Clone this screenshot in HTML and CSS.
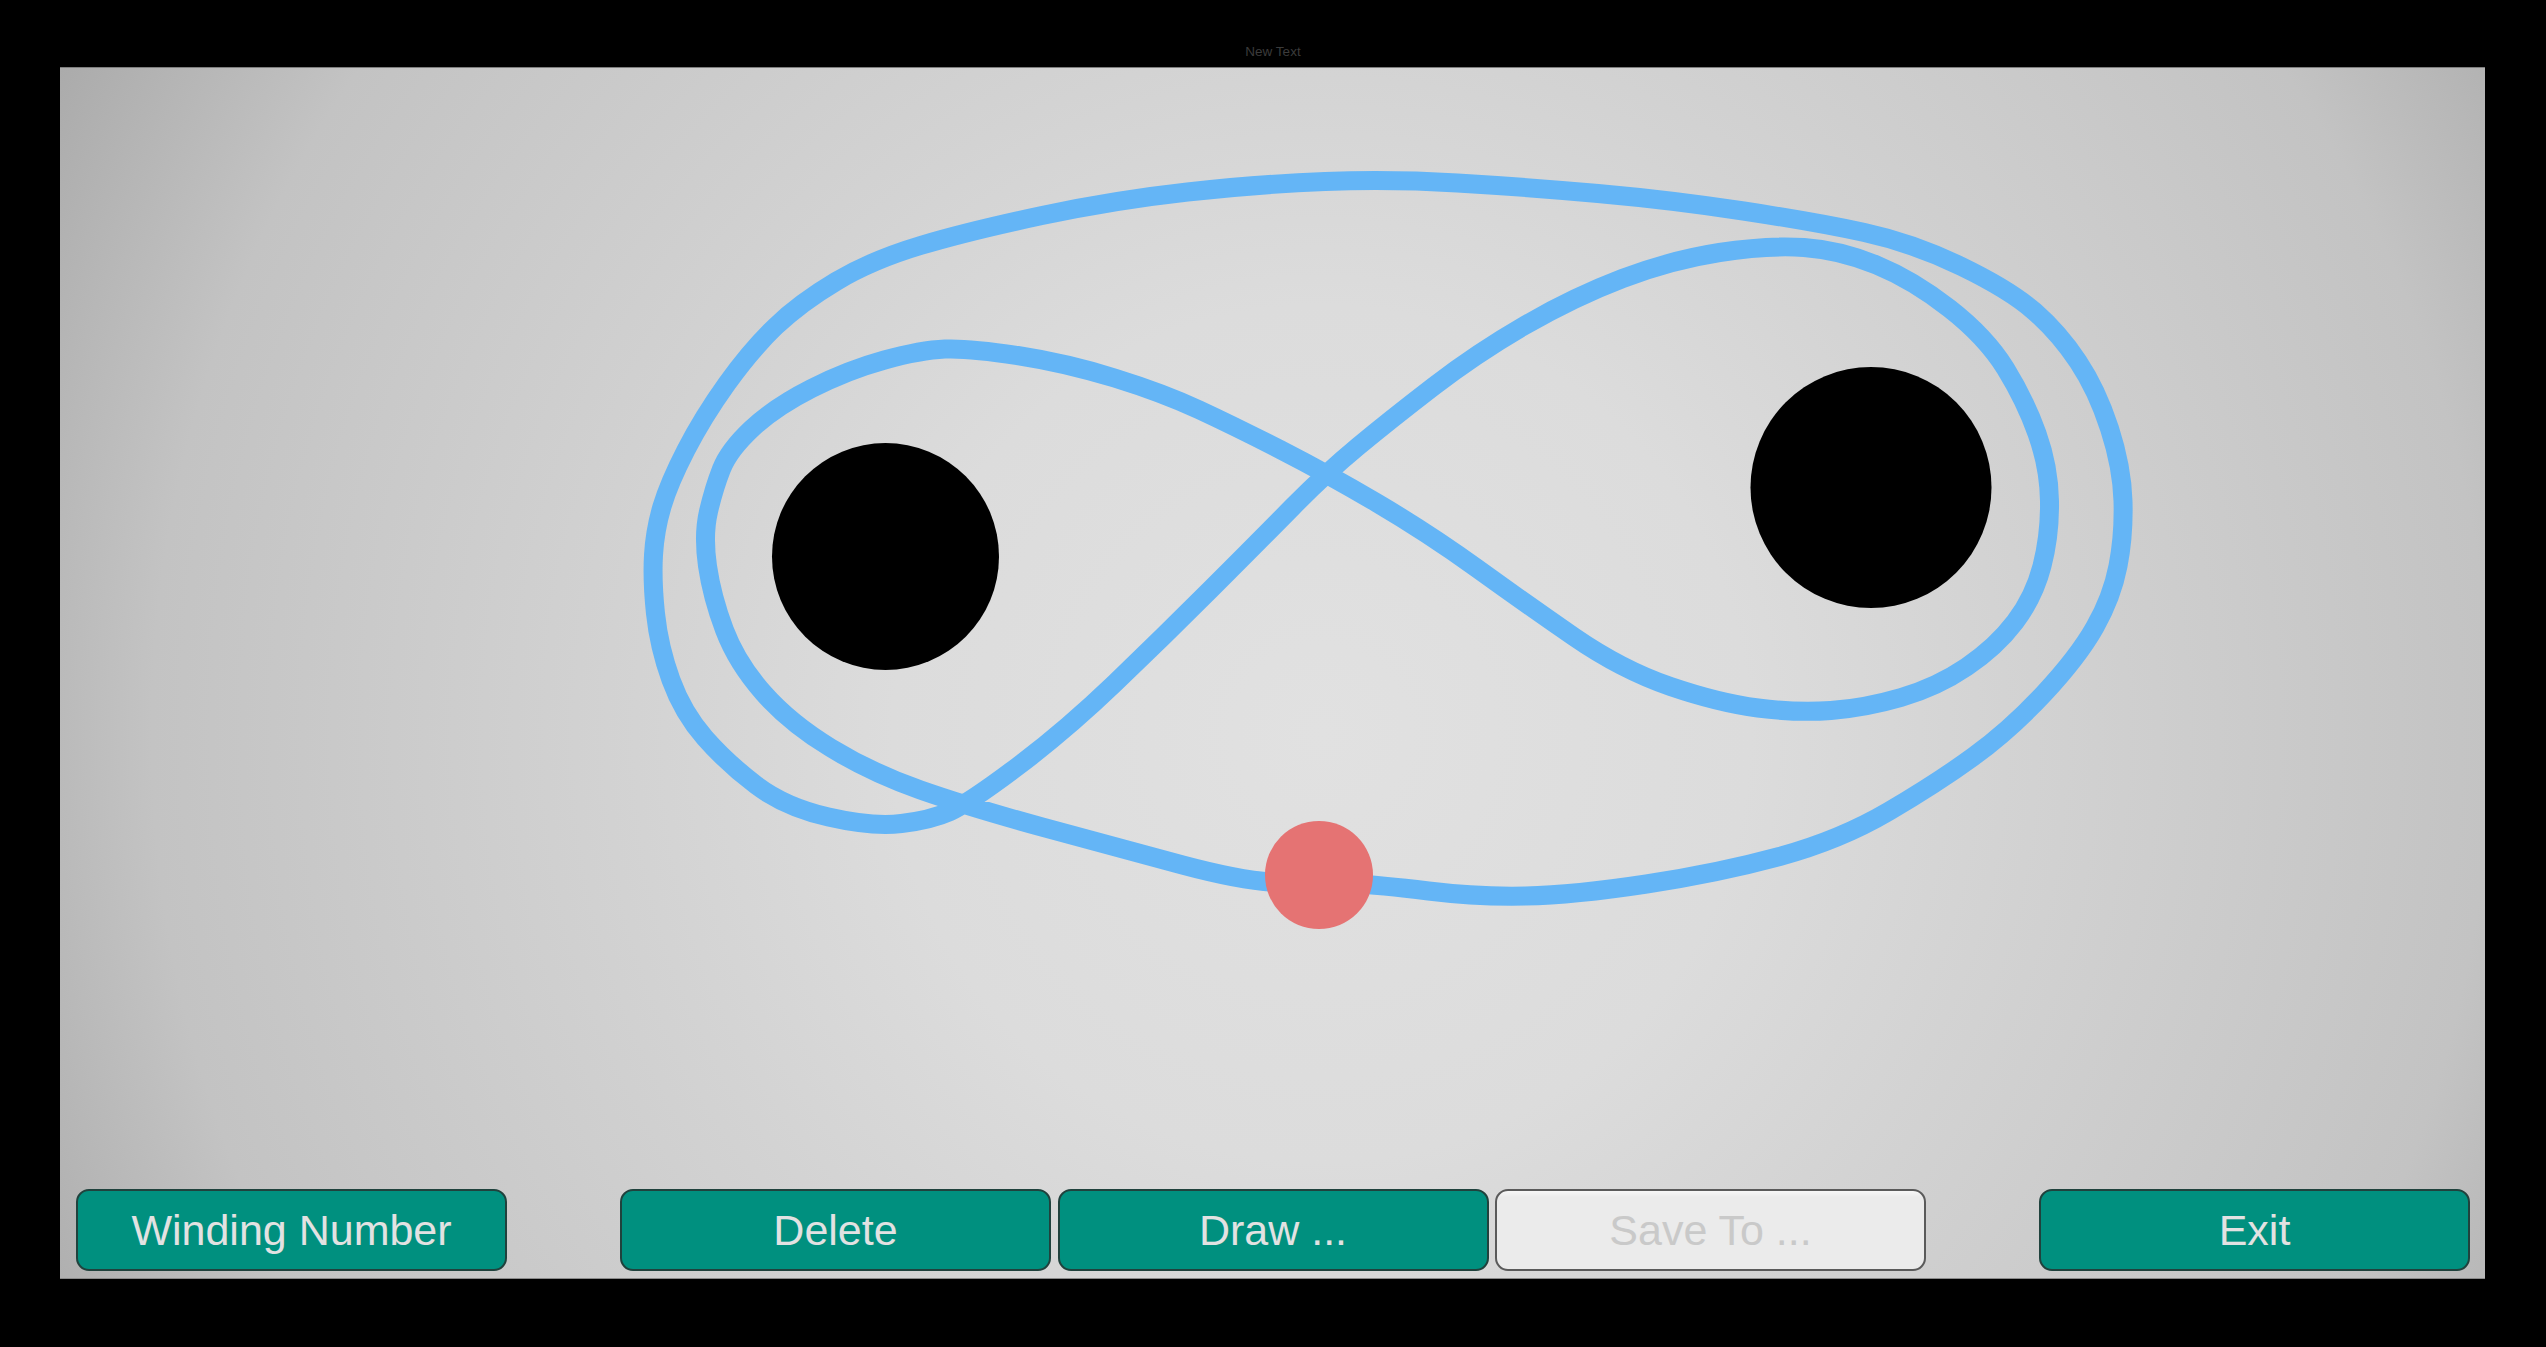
FILE: index.html
```html
<!DOCTYPE html>
<html>
<head>
<meta charset="utf-8">
<link rel="stylesheet" href="styles.css">
</head>
<body>
<div class="header"><span class="title">New Text</span></div>
<div class="panel">
  <svg class="canvas" viewBox="60 67 2425 1212" width="2425" height="1212">
    <path class="curve" d="M 1284.5 882.5
      Q 1250 883 1182.5 865 Q 1115 847 1042 827 Q 969 807 920.5 790 Q 872 773 831 748
      Q 790 723 763.5 693 Q 737 663 724.5 630 Q 712 597 707.5 566 Q 703 535 708.5 511.5
      Q 714 488 721.5 469 Q 729 450 752 428.5 Q 775 407 811.5 388.5 Q 848 370 884.5 360
      Q 921 350 945 349 Q 969 348 1017.5 355.5 Q 1066 363 1114.5 378 Q 1163 393 1199.5 410
      Q 1236 427 1281 450 Q 1326 473 1377 503 Q 1428 533 1476.5 568 Q 1525 603 1573.5 636.5
      Q 1622 670 1670.5 686.5 Q 1719 703 1758 708 Q 1797 713 1831 710.5 Q 1865 708 1901 697.5
      Q 1937 687 1966.5 667 Q 1996 647 2015 622 Q 2034 597 2042 566 Q 2050 535 2049.5 501
      Q 2049 467 2037 433.5 Q 2025 400 2005.5 368.5 Q 1986 337 1949.5 308.5 Q 1913 280 1876.5 265
      Q 1840 250 1804 247.5 Q 1768 245 1719.5 252.5 Q 1671 260 1622.5 278.5 Q 1574 297 1525.5 325
      Q 1477 353 1433.5 386.5 Q 1390 420 1358 446.5 Q 1326 473 1293 506.5 Q 1260 540 1211.5 588.5
      Q 1163 637 1114.5 683.5 Q 1066 730 1017.5 766.5 Q 969 803 950 811.5 Q 931 820 901.5 823.5
      Q 872 827 828.5 817 Q 785 807 756 785 Q 727 763 705 738 Q 683 713 671 680
      Q 659 647 655.5 613.5 Q 652 580 653.5 555 Q 655 530 662 506.5 Q 669 483 686 450
      Q 703 417 727 383.5 Q 751 350 775.5 326.5 Q 800 303 836 281.5 Q 872 260 920.5 245.5
      Q 969 231 1042 215.5 Q 1115 200 1187.5 192 Q 1260 184 1325 181.5 Q 1390 179 1457.5 183
      Q 1525 187 1598 193.5 Q 1671 200 1743.5 211 Q 1816 222 1864.5 232.5 Q 1913 243 1961.5 266.5
      Q 2010 290 2034.5 311.5 Q 2059 333 2078 361.5 Q 2097 390 2109.5 428.5 Q 2122 467 2123 501
      Q 2124 535 2118 566 Q 2112 597 2095 627 Q 2078 657 2044 693.5 Q 2010 730 1973.5 756.5
      Q 1937 783 1888.5 811.5 Q 1840 840 1779.5 856.5 Q 1719 873 1646.5 884 Q 1574 895 1525.5 896
      Q 1477 897 1428.5 891 Q 1380 885 1349.5 883.5 Q 1319 882 1284.5 882.5 Z"/>
    <circle class="hole" cx="885.5" cy="556.5" r="113.5"/>
    <circle class="hole" cx="1871" cy="487.5" r="120.5"/>
    <circle class="marker" cx="1319" cy="875" r="54"/>
  </svg>
  <div class="toolbar">
    <button class="btn">Winding Number</button>
    <div class="group">
      <button class="btn">Delete</button>
      <button class="btn">Draw ...</button>
      <button class="btn btn-disabled">Save To ...</button>
    </div>
    <button class="btn">Exit</button>
  </div>
</div>
</body>
</html>
```

FILE: styles.css
```css
html, body {
  margin: 0;
  padding: 0;
  background: #000;
  width: 2546px;
  height: 1347px;
  overflow: hidden;
  font-family: "Liberation Sans", Arial, sans-serif;
}

.header {
  height: 67px;
  box-sizing: border-box;
  display: flex;
  justify-content: center;
  align-items: flex-end;
  padding-bottom: 8px;
}

.title {
  font-size: 13.5px;
  line-height: 15px;
  color: #3b3b3b;
}

.panel {
  position: relative;
  margin-left: 60px;
  width: 2425px;
  height: 1212px;
  box-sizing: border-box;
  border-top: 1px solid #7e7e7e;
  border-bottom: 1px solid #8a8a8a;
  background: radial-gradient(circle farthest-corner at 52% 55%, #e1e1e1 0%, #dcdcdc 30%, #d3d3d3 48%, #c3c3c3 82%, #ababab 100%);
  display: flex;
  flex-direction: column;
  justify-content: flex-end;
  padding: 0 15px 7px 16px;
}

.canvas {
  position: absolute;
  left: 0;
  top: -1px;
}

.curve {
  fill: none;
  stroke: #64b5f6;
  stroke-width: 19;
  stroke-linejoin: round;
  stroke-linecap: round;
}

.hole { fill: #000; }
.marker { fill: #e57373; }

.toolbar {
  position: relative;
  display: flex;
  justify-content: space-between;
  align-items: center;
}

.group {
  display: flex;
  gap: 6.5px;
}

.btn {
  width: 431px;
  height: 82px;
  box-sizing: border-box;
  border: 2px solid #20423d;
  border-radius: 13px;
  background: #00907f;
  color: #e2e2e2;
  font-family: "Liberation Sans", Arial, sans-serif;
  font-size: 43px;
  padding: 0;
  display: flex;
  align-items: center;
  justify-content: center;
}

.btn-disabled {
  background: linear-gradient(#f7f7f7 0, #ebebeb 6px, #ebebeb 100%);
  border: 2px solid #5a5a5a;
  color: #c9c9c9;
}
```
